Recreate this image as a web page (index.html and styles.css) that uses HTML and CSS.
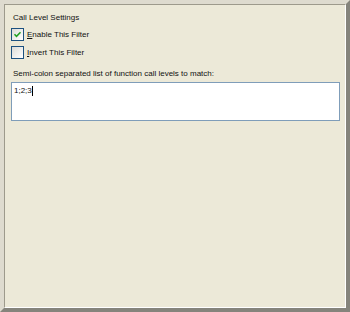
FILE: index.html
```html
<!DOCTYPE html>
<html lang="en">
<head>
    <meta charset="UTF-8">
    <title>Call Level Settings</title>
    <link rel="stylesheet" href="styles.css">
</head>
<body>

<div class="frame">
    <div class="panel">
        <div class="title">Call Level Settings</div>

        <label class="check-row">
            <span class="box checked">
                <svg width="9" height="9" viewBox="0 0 9 9"><path d="M1.5 4.2 L3.5 6.3 L7.5 2.2" fill="none" stroke="#21a121" stroke-width="1.5"/></svg>
            </span>
            <span><u>E</u>nable This Filter</span>
        </label>

        <label class="check-row">
            <span class="box"></span>
            <span><u>I</u>nvert This Filter</span>
        </label>

        <div class="caption">Semi-colon separated list of function call levels to match:</div>
        <div class="input">1;2;3<span class="caret"></span></div>
    </div>
</div>

</body>
</html>
```

FILE: styles.css
```css
body {
    margin: 0;
    background-color: #ece9d8;
    font-family: "Liberation Sans", Arial, sans-serif;
    font-size: 8px;
    color: #111;
}
.frame {
    width: 350px;
    height: 312px;
    box-sizing: border-box;
    border: 4px solid;
    border-color: #dedbcf #85847c #85847c #dedbcf;
}
.panel {
    height: 100%;
    box-sizing: border-box;
    border: 1px solid;
    border-color: #9d9a8c #ffffff #ffffff #9d9a8c;
    padding: 8px 5px 0 6px;
}
.title {
    padding-left: 2px;
    line-height: 10px;
    margin-bottom: 5px;
}
.check-row {
    display: flex;
    align-items: center;
    gap: 3px;
    height: 13px;
    margin-bottom: 5px;
}
.box {
    width: 11px;
    height: 11px;
    border: 1px solid #1c5180;
    background: linear-gradient(135deg, #dcdcd7, #ffffff);
    display: flex;
    align-items: center;
    justify-content: center;
}
.caption {
    padding-left: 2px;
    line-height: 10px;
    margin-top: 10px;
    margin-bottom: 3px;
}
.input {
    border: 1px solid #7f9db9;
    background-color: #fff;
    padding: 3px 2px;
    line-height: 10px;
    box-sizing: border-box;
    height: 39px;
}
.caret {
    display: inline-block;
    width: 1px;
    height: 10px;
    background-color: #000;
    vertical-align: top;
}
```
